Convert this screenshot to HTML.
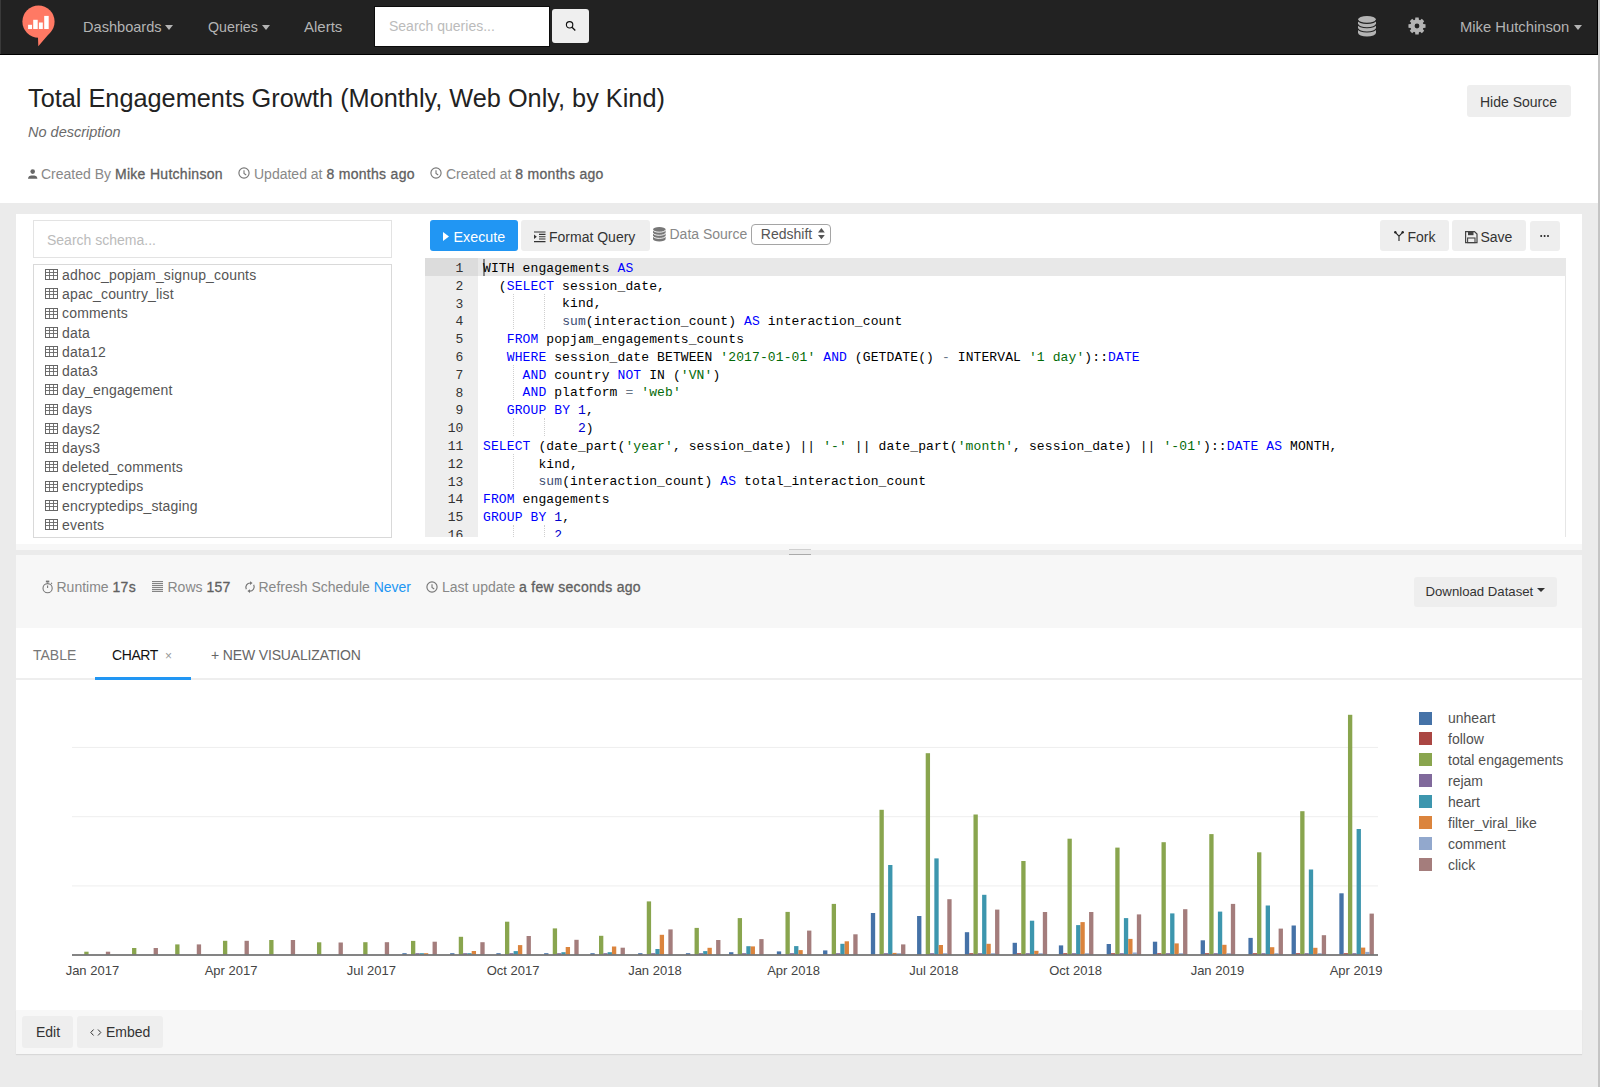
<!DOCTYPE html>
<html><head><meta charset="utf-8"><style>
*{box-sizing:border-box;margin:0;padding:0}
html,body{width:1600px;height:1087px;overflow:hidden}
body{background:#ebebeb;font-family:"Liberation Sans",sans-serif;font-size:14px;color:#333;position:relative}
.a{position:absolute;white-space:nowrap}
.nt{position:absolute;white-space:nowrap;color:#b4b4b4;font-size:15px;transform-origin:0 0}
.caret{position:absolute;width:0;height:0;border-left:4.7px solid transparent;border-right:4.7px solid transparent;border-top:5px solid #b4b4b4}
.btn{position:absolute;background:#eeeeee;border-radius:3px}
.meta{position:absolute;white-space:nowrap;color:#888;font-size:14px}
.meta b{color:#606060;font-weight:normal;letter-spacing:0.3px;-webkit-text-stroke:0.3px #606060}
.tab{position:absolute;white-space:nowrap;font-size:14px}
.tick{position:absolute;white-space:nowrap;font-size:13px;color:#444;width:80px;text-align:center}
.leg{position:absolute;white-space:nowrap;font-size:14px;color:#505050}
.code{position:absolute;white-space:pre;font-family:"Liberation Mono",monospace;font-size:13px;letter-spacing:0.11px;color:#000}
.gut{position:absolute;white-space:nowrap;font-family:"Liberation Mono",monospace;font-size:13px;color:#333;text-align:right;width:38px}
.kw{color:#0000ff}.st{color:#036a07}.fn{color:#3c4c72}.op{color:#687687}.nu{color:#0000cd}
.sch{position:absolute;white-space:nowrap;color:#555;font-size:14px;letter-spacing:0.17px}
</style></head><body>
<div class="a" style="left:0px;top:0px;width:1598px;height:55px;background:#222;border-bottom:1.4px solid #000;border-right:1px solid #000"></div>
<div class="a" style="left:0px;top:0px;width:1px;height:54px;background:#3a3a3a"></div>
<svg class="a" style="left:0px;top:0px;overflow:visible" width="60" height="50" viewBox="0 0 60 50">
 <circle cx="38.5" cy="21.6" r="16.1" fill="#ff7964"/>
 <path d="M37.9 35 L38.3 46.2 L51.8 30.5 L44 34 Z" fill="#ff7964"/>
 <rect x="28.1" y="24.8" width="3.9" height="4.2" fill="#fff"/>
 <rect x="33.2" y="19.8" width="4.5" height="9.2" fill="#fff"/>
 <rect x="38.9" y="22.5" width="3.9" height="6.5" fill="#fff"/>
 <rect x="44.2" y="15.9" width="4.5" height="13.1" fill="#fff"/></svg>
<div class="nt" style="left:83px;top:17.8px;transform:scaleX(0.972)">Dashboards</div>
<div class="caret" style="left:165px;top:24.5px"></div>
<div class="nt" style="left:207.5px;top:17.8px;transform:scaleX(0.95)">Queries</div>
<div class="caret" style="left:262px;top:24.5px"></div>
<div class="nt" style="left:304px;top:17.8px;">Alerts</div>
<div class="a" style="left:374px;top:6px;width:176px;height:41px;background:#fff;border:1px solid #0c0c0c"></div>
<div class="a" style="left:389px;top:18px;color:#bbb;font-size:14px">Search queries...</div>
<div class="btn" style="left:552px;top:9px;width:37px;height:34px;background:#efefef"></div>
<svg class="a" style="left:564px;top:19px;overflow:visible" width="12" height="12" viewBox="0 0 12 12"><circle cx="5.6" cy="5.8" r="3.2" fill="none" stroke="#111" stroke-width="1.15"/><path d="M8 8.3L11.3 11.4" stroke="#111" stroke-width="1.35"/></svg>
<svg class="a" style="left:1358.4px;top:15.6px;overflow:visible" width="18" height="21" viewBox="0 0 18 21"><path d="M0 3.7 A9 3.7 0 0 1 18 3.7 V16.8 A9 3.7 0 0 1 0 16.8 Z" fill="#b4b4b4"/>
<path d="M0 3.9 A9 3.5 0 0 0 18 3.9 M0 8.3 A9 3.5 0 0 0 18 8.3 M0 12.5 A9 3.5 0 0 0 18 12.5" fill="none" stroke="#222" stroke-width="1.1"/></svg>
<svg class="a" style="left:1408.3px;top:16.7px;overflow:visible" width="18" height="18" viewBox="0 0 18 18"><path fill-rule="evenodd" fill="#b4b4b4" d="M6.47 2.90 L7.07 2.69 L7.34 0.46 L10.66 0.46 L10.93 2.69 L11.53 2.90 L12.10 3.17 L13.86 1.79 L16.21 4.14 L14.83 5.90 L15.10 6.47 L15.31 7.07 L17.54 7.34 L17.54 10.66 L15.31 10.93 L15.10 11.53 L14.83 12.10 L16.21 13.86 L13.86 16.21 L12.10 14.83 L11.53 15.10 L10.93 15.31 L10.66 17.54 L7.34 17.54 L7.07 15.31 L6.47 15.10 L5.90 14.83 L4.14 16.21 L1.79 13.86 L3.17 12.10 L2.90 11.53 L2.69 10.93 L0.46 10.66 L0.46 7.34 L2.69 7.07 L2.90 6.47 L3.17 5.90 L1.79 4.14 L4.14 1.79 L5.90 3.17 Z M11.4 9 A2.4 2.4 0 1 0 6.6 9 A2.4 2.4 0 1 0 11.4 9 Z"/></svg>
<div class="nt" style="left:1459.5px;top:17.8px;transform:scaleX(0.985)">Mike Hutchinson</div>
<div class="caret" style="left:1574px;top:24.5px"></div>
<div class="a" style="left:1598px;top:0px;width:2px;height:1087px;background:#c4c4c4"></div>
<div class="a" style="left:0px;top:55px;width:1598px;height:148px;background:#fff"></div>
<div class="a" style="left:28px;top:83.5px;font-size:25.3px;color:#222">Total Engagements Growth (Monthly, Web Only, by Kind)</div>
<div class="a" style="left:28px;top:124px;font-size:14.5px;font-style:italic;color:#6a6a6a">No description</div>
<svg class="a" style="left:27.5px;top:168.5px;overflow:visible" width="10" height="10" viewBox="0 0 10 10"><circle cx="4.7" cy="2.6" r="2.3" fill="#666"/><path d="M0 9.8 C0.3 6.8 2.5 6.6 4.7 6.6 C6.9 6.6 9.1 6.8 9.4 9.8 Z" fill="#666"/></svg>
<div class="meta" style="left:41px;top:165.5px;">Created By <b>Mike Hutchinson</b></div>
<svg class="a" style="left:237.5px;top:167.2px;overflow:visible" width="12" height="12" viewBox="0 0 12 12"><circle cx="6" cy="6" r="5.1" fill="none" stroke="#777" stroke-width="1.15"/><path d="M6 3.2V6.4L8.2 8" fill="none" stroke="#777" stroke-width="1.1"/></svg>
<div class="meta" style="left:254px;top:165.5px;">Updated at <b>8 months ago</b></div>
<svg class="a" style="left:429.5px;top:167.2px;overflow:visible" width="12" height="12" viewBox="0 0 12 12"><circle cx="6" cy="6" r="5.1" fill="none" stroke="#777" stroke-width="1.15"/><path d="M6 3.2V6.4L8.2 8" fill="none" stroke="#777" stroke-width="1.1"/></svg>
<div class="meta" style="left:446px;top:165.5px;">Created at <b>8 months ago</b></div>
<div class="btn" style="left:1467px;top:85px;width:104px;height:32px"></div>
<div class="a" style="left:1480px;top:94px;font-size:14px;color:#333">Hide Source</div>
<div class="a" style="left:16px;top:214px;width:1566px;height:330px;background:#fff"></div>
<div class="a" style="left:33px;top:220px;width:358.5px;height:38px;border:1px solid #e3e3e3;background:#fff"></div>
<div class="a" style="left:47px;top:232px;color:#bbb;font-size:14px">Search schema...</div>
<div class="a" style="left:33px;top:264px;width:358.5px;height:274px;border:1px solid #d9d9d9;background:#fff"></div>
<div class="sch" style="left:45px;top:266.8px"><svg width="13" height="11" style="position:absolute;left:0;top:2.3px" viewBox="0 0 13 11"><rect x="0.5" y="0.5" width="12" height="10" fill="none" stroke="#666"/><path d="M0 3.5H13M0 6.5H13M4.5 0V11M8.5 0V11" stroke="#666" stroke-width="0.9"/></svg><span style="position:absolute;left:17px;top:0">adhoc_popjam_signup_counts</span></div>
<div class="sch" style="left:45px;top:286.0px"><svg width="13" height="11" style="position:absolute;left:0;top:2.3px" viewBox="0 0 13 11"><rect x="0.5" y="0.5" width="12" height="10" fill="none" stroke="#666"/><path d="M0 3.5H13M0 6.5H13M4.5 0V11M8.5 0V11" stroke="#666" stroke-width="0.9"/></svg><span style="position:absolute;left:17px;top:0">apac_country_list</span></div>
<div class="sch" style="left:45px;top:305.3px"><svg width="13" height="11" style="position:absolute;left:0;top:2.3px" viewBox="0 0 13 11"><rect x="0.5" y="0.5" width="12" height="10" fill="none" stroke="#666"/><path d="M0 3.5H13M0 6.5H13M4.5 0V11M8.5 0V11" stroke="#666" stroke-width="0.9"/></svg><span style="position:absolute;left:17px;top:0">comments</span></div>
<div class="sch" style="left:45px;top:324.5px"><svg width="13" height="11" style="position:absolute;left:0;top:2.3px" viewBox="0 0 13 11"><rect x="0.5" y="0.5" width="12" height="10" fill="none" stroke="#666"/><path d="M0 3.5H13M0 6.5H13M4.5 0V11M8.5 0V11" stroke="#666" stroke-width="0.9"/></svg><span style="position:absolute;left:17px;top:0">data</span></div>
<div class="sch" style="left:45px;top:343.7px"><svg width="13" height="11" style="position:absolute;left:0;top:2.3px" viewBox="0 0 13 11"><rect x="0.5" y="0.5" width="12" height="10" fill="none" stroke="#666"/><path d="M0 3.5H13M0 6.5H13M4.5 0V11M8.5 0V11" stroke="#666" stroke-width="0.9"/></svg><span style="position:absolute;left:17px;top:0">data12</span></div>
<div class="sch" style="left:45px;top:363.0px"><svg width="13" height="11" style="position:absolute;left:0;top:2.3px" viewBox="0 0 13 11"><rect x="0.5" y="0.5" width="12" height="10" fill="none" stroke="#666"/><path d="M0 3.5H13M0 6.5H13M4.5 0V11M8.5 0V11" stroke="#666" stroke-width="0.9"/></svg><span style="position:absolute;left:17px;top:0">data3</span></div>
<div class="sch" style="left:45px;top:382.2px"><svg width="13" height="11" style="position:absolute;left:0;top:2.3px" viewBox="0 0 13 11"><rect x="0.5" y="0.5" width="12" height="10" fill="none" stroke="#666"/><path d="M0 3.5H13M0 6.5H13M4.5 0V11M8.5 0V11" stroke="#666" stroke-width="0.9"/></svg><span style="position:absolute;left:17px;top:0">day_engagement</span></div>
<div class="sch" style="left:45px;top:401.4px"><svg width="13" height="11" style="position:absolute;left:0;top:2.3px" viewBox="0 0 13 11"><rect x="0.5" y="0.5" width="12" height="10" fill="none" stroke="#666"/><path d="M0 3.5H13M0 6.5H13M4.5 0V11M8.5 0V11" stroke="#666" stroke-width="0.9"/></svg><span style="position:absolute;left:17px;top:0">days</span></div>
<div class="sch" style="left:45px;top:420.6px"><svg width="13" height="11" style="position:absolute;left:0;top:2.3px" viewBox="0 0 13 11"><rect x="0.5" y="0.5" width="12" height="10" fill="none" stroke="#666"/><path d="M0 3.5H13M0 6.5H13M4.5 0V11M8.5 0V11" stroke="#666" stroke-width="0.9"/></svg><span style="position:absolute;left:17px;top:0">days2</span></div>
<div class="sch" style="left:45px;top:439.9px"><svg width="13" height="11" style="position:absolute;left:0;top:2.3px" viewBox="0 0 13 11"><rect x="0.5" y="0.5" width="12" height="10" fill="none" stroke="#666"/><path d="M0 3.5H13M0 6.5H13M4.5 0V11M8.5 0V11" stroke="#666" stroke-width="0.9"/></svg><span style="position:absolute;left:17px;top:0">days3</span></div>
<div class="sch" style="left:45px;top:459.1px"><svg width="13" height="11" style="position:absolute;left:0;top:2.3px" viewBox="0 0 13 11"><rect x="0.5" y="0.5" width="12" height="10" fill="none" stroke="#666"/><path d="M0 3.5H13M0 6.5H13M4.5 0V11M8.5 0V11" stroke="#666" stroke-width="0.9"/></svg><span style="position:absolute;left:17px;top:0">deleted_comments</span></div>
<div class="sch" style="left:45px;top:478.3px"><svg width="13" height="11" style="position:absolute;left:0;top:2.3px" viewBox="0 0 13 11"><rect x="0.5" y="0.5" width="12" height="10" fill="none" stroke="#666"/><path d="M0 3.5H13M0 6.5H13M4.5 0V11M8.5 0V11" stroke="#666" stroke-width="0.9"/></svg><span style="position:absolute;left:17px;top:0">encryptedips</span></div>
<div class="sch" style="left:45px;top:497.6px"><svg width="13" height="11" style="position:absolute;left:0;top:2.3px" viewBox="0 0 13 11"><rect x="0.5" y="0.5" width="12" height="10" fill="none" stroke="#666"/><path d="M0 3.5H13M0 6.5H13M4.5 0V11M8.5 0V11" stroke="#666" stroke-width="0.9"/></svg><span style="position:absolute;left:17px;top:0">encryptedips_staging</span></div>
<div class="sch" style="left:45px;top:516.8px"><svg width="13" height="11" style="position:absolute;left:0;top:2.3px" viewBox="0 0 13 11"><rect x="0.5" y="0.5" width="12" height="10" fill="none" stroke="#666"/><path d="M0 3.5H13M0 6.5H13M4.5 0V11M8.5 0V11" stroke="#666" stroke-width="0.9"/></svg><span style="position:absolute;left:17px;top:0">events</span></div>
<div class="a" style="left:430px;top:220px;width:88px;height:31px;background:#2196f3;border-radius:3px"></div>
<svg class="a" style="left:442.5px;top:232px;overflow:visible" width="7" height="9" viewBox="0 0 7 9"><path d="M0 0L6 4.5L0 9Z" fill="#fff"/></svg>
<div class="a" style="left:453.5px;top:229px;color:#fff;font-size:14.3px">Execute</div>
<div class="btn" style="left:521px;top:220px;width:129px;height:31px"></div>
<svg class="a" style="left:534px;top:230.5px;overflow:visible" width="12" height="12" viewBox="0 0 12 12"><path d="M0 1H11.5M5 3.4H11.5M5 5.7H11.5M5 8H11.5M0 10.6H11.5" stroke="#333" stroke-width="1.1"/><path d="M0 3.6L2.8 5.8L0 8Z" fill="#333"/></svg>
<div class="a" style="left:549px;top:229px;color:#333;font-size:14px">Format Query</div>
<svg class="a" style="left:653px;top:226.7px;overflow:visible" width="13" height="15" viewBox="0 0 13 15"><path d="M0 2.6 A6.3 2.6 0 0 1 12.6 2.6 V12 A6.3 2.6 0 0 1 0 12 Z" fill="#777"/>
<path d="M0 2.8 A6.3 2.4 0 0 0 12.6 2.8 M0 5.9 A6.3 2.4 0 0 0 12.6 5.9 M0 9 A6.3 2.4 0 0 0 12.6 9" fill="none" stroke="#fff" stroke-width="0.9"/></svg>
<div class="a" style="left:669.5px;top:226px;color:#888;font-size:14px">Data Source</div>
<div class="a" style="left:751px;top:224px;width:80px;height:21px;border:1px solid #a5a5a5;border-radius:4px;background:#fff"></div>
<div class="a" style="left:760.8px;top:226px;color:#555;font-size:14px">Redshift</div>
<svg class="a" style="left:818px;top:228px;overflow:visible" width="7" height="12" viewBox="0 0 7 12"><path d="M0 4.4L3.4 0L6.8 4.4Z M0 6.9L3.4 11.3L6.8 6.9Z" fill="#555"/></svg>
<div class="btn" style="left:1380px;top:220px;width:69px;height:31px"></div>
<svg class="a" style="left:1393.5px;top:231px;overflow:visible" width="10" height="10" viewBox="0 0 10 10"><circle cx="1.3" cy="1.3" r="1.2" fill="#222"/><circle cx="8.7" cy="1.3" r="1.2" fill="#222"/><path d="M1.3 1.3L5 5.2L8.7 1.3M5 5.2V10" fill="none" stroke="#222" stroke-width="1.1"/></svg>
<div class="a" style="left:1407.5px;top:229px;font-size:14px;color:#333">Fork</div>
<div class="btn" style="left:1452px;top:220px;width:74px;height:31px"></div>
<svg class="a" style="left:1465.3px;top:230.6px;overflow:visible" width="13" height="13" viewBox="0 0 13 13"><path d="M0.6 0.6H9.5L12 3.1V11.6H0.6Z" fill="none" stroke="#444" stroke-width="1.2"/><rect x="3" y="0.6" width="5.5" height="3.6" fill="#444"/><rect x="2.6" y="7" width="7.4" height="4.6" fill="none" stroke="#444" stroke-width="1.1"/></svg>
<div class="a" style="left:1480.5px;top:229px;font-size:14px;color:#333">Save</div>
<div class="btn" style="left:1530px;top:221px;width:30px;height:30px"></div>
<svg class="a" style="left:1540px;top:235px;overflow:visible" width="10" height="3" viewBox="0 0 10 3"><circle cx="1.2" cy="1.1" r="1" fill="#222"/><circle cx="4.6" cy="1.1" r="1" fill="#222"/><circle cx="8" cy="1.1" r="1" fill="#222"/></svg>
<div class="a" style="left:424.8px;top:258px;width:1141px;height:279px;border-right:1px solid #e6e6e6;overflow:hidden"></div>
<div class="a" style="left:424.8px;top:258px;width:53px;height:279px;background:#eeeeee"></div>
<div class="a" style="left:424.8px;top:258px;width:53px;height:18px;background:#dcdcdc"></div>
<div class="a" style="left:477.8px;top:258px;width:1088px;height:18px;background:#e8e8e8"></div>
<div class="a" style="left:483px;top:258.5px;width:1.5px;height:17px;background:#888"></div>
<div class="a" style="left:0;top:0;width:1600px;height:537px;overflow:hidden"><div class="gut" style="left:425.3px;top:260.00px;line-height:17.8px">1</div><div class="code" style="left:483px;top:259.80px;line-height:17.8px">WITH engagements <span class="kw">AS</span></div>
<div class="gut" style="left:425.3px;top:277.80px;line-height:17.8px">2</div><div class="code" style="left:483px;top:277.60px;line-height:17.8px">  (<span class="kw">SELECT</span> session_date,</div>
<div class="gut" style="left:425.3px;top:295.60px;line-height:17.8px">3</div><div class="code" style="left:483px;top:295.40px;line-height:17.8px">          kind,</div>
<div class="gut" style="left:425.3px;top:313.40px;line-height:17.8px">4</div><div class="code" style="left:483px;top:313.20px;line-height:17.8px">          <span class="fn">sum</span>(interaction_count) <span class="kw">AS</span> interaction_count</div>
<div class="gut" style="left:425.3px;top:331.20px;line-height:17.8px">5</div><div class="code" style="left:483px;top:331.00px;line-height:17.8px">   <span class="kw">FROM</span> popjam_engagements_counts</div>
<div class="gut" style="left:425.3px;top:349.00px;line-height:17.8px">6</div><div class="code" style="left:483px;top:348.80px;line-height:17.8px">   <span class="kw">WHERE</span> session_date BETWEEN <span class="st">&#x27;2017-01-01&#x27;</span> <span class="kw">AND</span> (GETDATE() <span class="op">-</span> INTERVAL <span class="st">&#x27;1 day&#x27;</span>)::<span class="kw">DATE</span></div>
<div class="gut" style="left:425.3px;top:366.80px;line-height:17.8px">7</div><div class="code" style="left:483px;top:366.60px;line-height:17.8px">     <span class="kw">AND</span> country <span class="kw">NOT</span> IN (<span class="st">&#x27;VN&#x27;</span>)</div>
<div class="gut" style="left:425.3px;top:384.60px;line-height:17.8px">8</div><div class="code" style="left:483px;top:384.40px;line-height:17.8px">     <span class="kw">AND</span> platform <span class="op">=</span> <span class="st">&#x27;web&#x27;</span></div>
<div class="gut" style="left:425.3px;top:402.40px;line-height:17.8px">9</div><div class="code" style="left:483px;top:402.20px;line-height:17.8px">   <span class="kw">GROUP</span> <span class="kw">BY</span> <span class="nu">1</span>,</div>
<div class="gut" style="left:425.3px;top:420.20px;line-height:17.8px">10</div><div class="code" style="left:483px;top:420.00px;line-height:17.8px">            <span class="nu">2</span>)</div>
<div class="gut" style="left:425.3px;top:438.00px;line-height:17.8px">11</div><div class="code" style="left:483px;top:437.80px;line-height:17.8px"><span class="kw">SELECT</span> (date_part(<span class="st">&#x27;year&#x27;</span>, session_date) || <span class="st">&#x27;-&#x27;</span> || date_part(<span class="st">&#x27;month&#x27;</span>, session_date) || <span class="st">&#x27;-01&#x27;</span>)::<span class="kw">DATE</span> <span class="kw">AS</span> MONTH,</div>
<div class="gut" style="left:425.3px;top:455.80px;line-height:17.8px">12</div><div class="code" style="left:483px;top:455.60px;line-height:17.8px">       kind,</div>
<div class="gut" style="left:425.3px;top:473.60px;line-height:17.8px">13</div><div class="code" style="left:483px;top:473.40px;line-height:17.8px">       <span class="fn">sum</span>(interaction_count) <span class="kw">AS</span> total_interaction_count</div>
<div class="gut" style="left:425.3px;top:491.40px;line-height:17.8px">14</div><div class="code" style="left:483px;top:491.20px;line-height:17.8px"><span class="kw">FROM</span> engagements</div>
<div class="gut" style="left:425.3px;top:509.20px;line-height:17.8px">15</div><div class="code" style="left:483px;top:509.00px;line-height:17.8px"><span class="kw">GROUP</span> <span class="kw">BY</span> <span class="nu">1</span>,</div>
<div class="gut" style="left:425.3px;top:527.00px;line-height:17.8px">16</div><div class="code" style="left:483px;top:526.80px;line-height:17.8px">         <span class="nu">2</span></div>
<div class="a" style="left:512.5px;top:293.6px;height:35.6px;border-left:1px dotted #cfcfcf"></div><div class="a" style="left:544px;top:293.6px;height:35.6px;border-left:1px dotted #cfcfcf"></div><div class="a" style="left:512.5px;top:364.8px;height:35.6px;border-left:1px dotted #cfcfcf"></div><div class="a" style="left:512.5px;top:418.2px;height:17.8px;border-left:1px dotted #cfcfcf"></div><div class="a" style="left:544px;top:418.2px;height:17.8px;border-left:1px dotted #cfcfcf"></div><div class="a" style="left:512.5px;top:453.8px;height:35.6px;border-left:1px dotted #cfcfcf"></div><div class="a" style="left:512.5px;top:525.0px;height:12.0px;border-left:1px dotted #cfcfcf"></div><div class="a" style="left:544px;top:525.0px;height:12.0px;border-left:1px dotted #cfcfcf"></div></div>
<div class="a" style="left:16px;top:544px;width:1566px;height:84px;background:#f7f7f7"></div>
<div class="a" style="left:16px;top:550px;width:1566px;height:5px;background:#ebebeb"></div>
<div class="a" style="left:789px;top:548.5px;width:22px;height:1px;background:#cfcfcf"></div>
<div class="a" style="left:789px;top:554px;width:22px;height:1.2px;background:#aaa"></div>
<svg class="a" style="left:41.5px;top:579.5px;overflow:visible" width="12" height="14" viewBox="0 0 12 14"><circle cx="5.6" cy="8.2" r="4.6" fill="none" stroke="#777" stroke-width="1.1"/><rect x="3.9" y="0.6" width="3.4" height="1.8" fill="#777"/><path d="M5.6 2.4V3.6M5.6 5.4V8" stroke="#777" stroke-width="1.1"/><path d="M9 3.8L10 2.9" stroke="#777" stroke-width="1.2"/></svg>
<div class="meta" style="left:56.5px;top:579.3px;">Runtime <b>17s</b></div>
<svg class="a" style="left:152px;top:581px;overflow:visible" width="11" height="11" viewBox="0 0 11 11"><path d="M0 0.6H11M0 2.6H11M0 4.6H11M0 6.6H11M0 8.6H11M0 10.4H11" stroke="#777" stroke-width="1"/></svg>
<div class="meta" style="left:167.5px;top:579.3px;">Rows <b>157</b></div>
<svg class="a" style="left:244.5px;top:580.5px;overflow:visible" width="10" height="12" viewBox="0 0 10 12"><path d="M1.3 8.3 A4.4 4.4 0 0 1 5.5 2" fill="none" stroke="#777" stroke-width="1.2"/><path d="M5 0.2L7.6 2.1L5 4Z" fill="#777"/><path d="M8.7 3.8 A4.4 4.4 0 0 1 4.5 10.2" fill="none" stroke="#777" stroke-width="1.2"/><path d="M5 8.2L2.4 10.1L5 12Z" fill="#777"/></svg>
<div class="meta" style="left:258.5px;top:579.3px;">Refresh Schedule <span style="color:#2196f3">Never</span></div>
<svg class="a" style="left:426px;top:581px;overflow:visible" width="12" height="12" viewBox="0 0 12 12"><circle cx="6" cy="6" r="5.1" fill="none" stroke="#777" stroke-width="1.15"/><path d="M6 3.2V6.4L8.2 8" fill="none" stroke="#777" stroke-width="1.1"/></svg>
<div class="meta" style="left:442px;top:579.3px;">Last update <b>a few seconds ago</b></div>
<div class="btn" style="left:1414px;top:577px;width:143px;height:30px"></div>
<div class="a" style="left:1425.5px;top:584px;font-size:13.2px;color:#333">Download Dataset</div>
<div class="a" style="left:1537px;top:588px;width:0;height:0;border-left:4.5px solid transparent;border-right:4.5px solid transparent;border-top:4.5px solid #333"></div>
<div class="a" style="left:16px;top:628px;width:1566px;height:382px;background:#fff"></div>
<div class="a" style="left:16px;top:678px;width:1566px;height:2px;background:#eee"></div>
<div class="a" style="left:95px;top:677px;width:96px;height:3px;background:#2196f3"></div>
<div class="tab" style="left:33px;top:646.5px;color:#777">TABLE</div>
<div class="tab" style="left:112px;top:646.5px;color:#111;letter-spacing:-0.4px">CHART</div>
<div class="a" style="left:165px;top:649px;font-size:12px;color:#999">&times;</div>
<div class="tab" style="left:211px;top:646.5px;color:#666;letter-spacing:-0.15px">+ NEW VISUALIZATION</div>
<svg class="a" style="left:0;top:0" width="1600" height="1087" viewBox="0 0 1600 1087"><rect x="72" y="746.9" width="1306" height="1" fill="#eee"/><rect x="72" y="816.2" width="1306" height="1" fill="#eee"/><rect x="72" y="885.4" width="1306" height="1" fill="#eee"/><rect x="84.27" y="951.7" width="4.32" height="3.3" fill="#89A54E"/><rect x="105.85" y="951.7" width="4.32" height="3.3" fill="#A47D7C"/><rect x="132.04" y="948.0" width="4.32" height="7.0" fill="#89A54E"/><rect x="153.62" y="948.0" width="4.32" height="7.0" fill="#A47D7C"/><rect x="175.19" y="944.4" width="4.32" height="10.6" fill="#89A54E"/><rect x="196.77" y="944.4" width="4.32" height="10.6" fill="#A47D7C"/><rect x="222.97" y="940.8" width="4.32" height="14.2" fill="#89A54E"/><rect x="244.54" y="940.8" width="4.32" height="14.2" fill="#A47D7C"/><rect x="269.20" y="940.0" width="4.32" height="15.0" fill="#89A54E"/><rect x="290.78" y="940.0" width="4.32" height="15.0" fill="#A47D7C"/><rect x="316.98" y="942.3" width="4.32" height="12.7" fill="#89A54E"/><rect x="338.55" y="942.5" width="4.32" height="12.5" fill="#A47D7C"/><rect x="363.21" y="942.2" width="4.32" height="12.8" fill="#89A54E"/><rect x="384.78" y="942.2" width="4.32" height="12.8" fill="#A47D7C"/><rect x="402.35" y="953.2" width="4.32" height="1.8" fill="#4572A7"/><rect x="410.98" y="940.9" width="4.32" height="14.1" fill="#89A54E"/><rect x="415.30" y="953.2" width="4.32" height="1.8" fill="#80699B"/><rect x="419.61" y="953.2" width="4.32" height="1.8" fill="#3D96AE"/><rect x="423.93" y="953.2" width="4.32" height="1.8" fill="#DB843D"/><rect x="432.56" y="941.7" width="4.32" height="13.3" fill="#A47D7C"/><rect x="450.13" y="953.2" width="4.32" height="1.8" fill="#4572A7"/><rect x="458.76" y="936.8" width="4.32" height="18.2" fill="#89A54E"/><rect x="463.07" y="953.2" width="4.32" height="1.8" fill="#80699B"/><rect x="467.39" y="953.2" width="4.32" height="1.8" fill="#3D96AE"/><rect x="471.70" y="951.0" width="4.32" height="4.0" fill="#DB843D"/><rect x="480.33" y="942.2" width="4.32" height="12.8" fill="#A47D7C"/><rect x="496.36" y="953.2" width="4.32" height="1.8" fill="#4572A7"/><rect x="504.99" y="921.7" width="4.32" height="33.3" fill="#89A54E"/><rect x="509.31" y="953.2" width="4.32" height="1.8" fill="#80699B"/><rect x="513.62" y="951.1" width="4.32" height="3.9" fill="#3D96AE"/><rect x="517.94" y="945.1" width="4.32" height="9.9" fill="#DB843D"/><rect x="526.57" y="936.0" width="4.32" height="19.0" fill="#A47D7C"/><rect x="544.13" y="953.2" width="4.32" height="1.8" fill="#4572A7"/><rect x="552.76" y="928.4" width="4.32" height="26.6" fill="#89A54E"/><rect x="557.08" y="953.2" width="4.32" height="1.8" fill="#80699B"/><rect x="561.39" y="952.2" width="4.32" height="2.8" fill="#3D96AE"/><rect x="565.71" y="947.0" width="4.32" height="8.0" fill="#DB843D"/><rect x="574.34" y="939.8" width="4.32" height="15.2" fill="#A47D7C"/><rect x="590.37" y="953.2" width="4.32" height="1.8" fill="#4572A7"/><rect x="599.00" y="935.8" width="4.32" height="19.2" fill="#89A54E"/><rect x="603.31" y="953.2" width="4.32" height="1.8" fill="#80699B"/><rect x="607.63" y="952.2" width="4.32" height="2.8" fill="#3D96AE"/><rect x="611.94" y="946.5" width="4.32" height="8.5" fill="#DB843D"/><rect x="620.57" y="947.7" width="4.32" height="7.3" fill="#A47D7C"/><rect x="638.14" y="953.2" width="4.32" height="1.8" fill="#4572A7"/><rect x="646.77" y="901.4" width="4.32" height="53.6" fill="#89A54E"/><rect x="651.09" y="953.2" width="4.32" height="1.8" fill="#80699B"/><rect x="655.40" y="949.0" width="4.32" height="6.0" fill="#3D96AE"/><rect x="659.72" y="934.8" width="4.32" height="20.2" fill="#DB843D"/><rect x="668.35" y="929.4" width="4.32" height="25.6" fill="#A47D7C"/><rect x="685.92" y="953.2" width="4.32" height="1.8" fill="#4572A7"/><rect x="694.55" y="927.9" width="4.32" height="27.1" fill="#89A54E"/><rect x="698.86" y="953.2" width="4.32" height="1.8" fill="#80699B"/><rect x="703.18" y="951.1" width="4.32" height="3.9" fill="#3D96AE"/><rect x="707.49" y="947.8" width="4.32" height="7.2" fill="#DB843D"/><rect x="716.12" y="940.0" width="4.32" height="15.0" fill="#A47D7C"/><rect x="729.07" y="952.2" width="4.32" height="2.8" fill="#4572A7"/><rect x="737.70" y="918.1" width="4.32" height="36.9" fill="#89A54E"/><rect x="742.01" y="953.2" width="4.32" height="1.8" fill="#80699B"/><rect x="746.33" y="946.2" width="4.32" height="8.8" fill="#3D96AE"/><rect x="750.64" y="946.4" width="4.32" height="8.6" fill="#DB843D"/><rect x="759.27" y="939.1" width="4.32" height="15.9" fill="#A47D7C"/><rect x="776.84" y="951.4" width="4.32" height="3.6" fill="#4572A7"/><rect x="785.47" y="911.9" width="4.32" height="43.1" fill="#89A54E"/><rect x="789.79" y="953.2" width="4.32" height="1.8" fill="#80699B"/><rect x="794.10" y="946.1" width="4.32" height="8.9" fill="#3D96AE"/><rect x="798.42" y="950.1" width="4.32" height="4.9" fill="#DB843D"/><rect x="807.05" y="930.6" width="4.32" height="24.4" fill="#A47D7C"/><rect x="823.07" y="950.4" width="4.32" height="4.6" fill="#4572A7"/><rect x="831.70" y="903.9" width="4.32" height="51.1" fill="#89A54E"/><rect x="836.02" y="953.2" width="4.32" height="1.8" fill="#80699B"/><rect x="840.33" y="943.8" width="4.32" height="11.2" fill="#3D96AE"/><rect x="844.65" y="941.3" width="4.32" height="13.7" fill="#DB843D"/><rect x="853.28" y="934.3" width="4.32" height="20.7" fill="#A47D7C"/><rect x="870.85" y="913.0" width="4.32" height="42.0" fill="#4572A7"/><rect x="879.48" y="809.8" width="4.32" height="145.2" fill="#89A54E"/><rect x="883.79" y="953.2" width="4.32" height="1.8" fill="#80699B"/><rect x="888.11" y="865.0" width="4.32" height="90.0" fill="#3D96AE"/><rect x="892.42" y="952.9" width="4.32" height="2.1" fill="#DB843D"/><rect x="896.74" y="953.2" width="4.32" height="1.8" fill="#92A8CD"/><rect x="901.05" y="944.4" width="4.32" height="10.6" fill="#A47D7C"/><rect x="917.08" y="916.0" width="4.32" height="39.0" fill="#4572A7"/><rect x="925.71" y="753.2" width="4.32" height="201.8" fill="#89A54E"/><rect x="930.03" y="953.2" width="4.32" height="1.8" fill="#80699B"/><rect x="934.34" y="858.4" width="4.32" height="96.6" fill="#3D96AE"/><rect x="938.66" y="945.0" width="4.32" height="10.0" fill="#DB843D"/><rect x="942.97" y="953.2" width="4.32" height="1.8" fill="#92A8CD"/><rect x="947.29" y="899.2" width="4.32" height="55.8" fill="#A47D7C"/><rect x="964.85" y="932.2" width="4.32" height="22.8" fill="#4572A7"/><rect x="969.17" y="953.2" width="4.32" height="1.8" fill="#AA4643"/><rect x="973.48" y="814.5" width="4.32" height="140.5" fill="#89A54E"/><rect x="977.80" y="953.2" width="4.32" height="1.8" fill="#80699B"/><rect x="982.11" y="894.8" width="4.32" height="60.2" fill="#3D96AE"/><rect x="986.43" y="943.8" width="4.32" height="11.2" fill="#DB843D"/><rect x="990.74" y="953.2" width="4.32" height="1.8" fill="#92A8CD"/><rect x="995.06" y="909.6" width="4.32" height="45.4" fill="#A47D7C"/><rect x="1012.63" y="942.8" width="4.32" height="12.2" fill="#4572A7"/><rect x="1016.94" y="953.2" width="4.32" height="1.8" fill="#AA4643"/><rect x="1021.26" y="861.0" width="4.32" height="94.0" fill="#89A54E"/><rect x="1025.57" y="953.2" width="4.32" height="1.8" fill="#80699B"/><rect x="1029.89" y="920.7" width="4.32" height="34.3" fill="#3D96AE"/><rect x="1034.20" y="950.8" width="4.32" height="4.2" fill="#DB843D"/><rect x="1038.52" y="953.2" width="4.32" height="1.8" fill="#92A8CD"/><rect x="1042.83" y="912.0" width="4.32" height="43.0" fill="#A47D7C"/><rect x="1058.86" y="945.4" width="4.32" height="9.6" fill="#4572A7"/><rect x="1063.18" y="953.2" width="4.32" height="1.8" fill="#AA4643"/><rect x="1067.49" y="838.7" width="4.32" height="116.3" fill="#89A54E"/><rect x="1071.81" y="953.2" width="4.32" height="1.8" fill="#80699B"/><rect x="1076.12" y="925.1" width="4.32" height="29.9" fill="#3D96AE"/><rect x="1080.44" y="922.1" width="4.32" height="32.9" fill="#DB843D"/><rect x="1084.75" y="953.2" width="4.32" height="1.8" fill="#92A8CD"/><rect x="1089.07" y="912.0" width="4.32" height="43.0" fill="#A47D7C"/><rect x="1106.64" y="944.0" width="4.32" height="11.0" fill="#4572A7"/><rect x="1110.95" y="953.2" width="4.32" height="1.8" fill="#AA4643"/><rect x="1115.27" y="847.6" width="4.32" height="107.4" fill="#89A54E"/><rect x="1119.58" y="953.2" width="4.32" height="1.8" fill="#80699B"/><rect x="1123.90" y="918.1" width="4.32" height="36.9" fill="#3D96AE"/><rect x="1128.21" y="938.9" width="4.32" height="16.1" fill="#DB843D"/><rect x="1132.53" y="952.5" width="4.32" height="2.5" fill="#92A8CD"/><rect x="1136.84" y="914.4" width="4.32" height="40.6" fill="#A47D7C"/><rect x="1152.87" y="941.7" width="4.32" height="13.3" fill="#4572A7"/><rect x="1157.18" y="953.2" width="4.32" height="1.8" fill="#AA4643"/><rect x="1161.50" y="842.2" width="4.32" height="112.8" fill="#89A54E"/><rect x="1165.81" y="953.2" width="4.32" height="1.8" fill="#80699B"/><rect x="1170.13" y="913.4" width="4.32" height="41.6" fill="#3D96AE"/><rect x="1174.44" y="943.4" width="4.32" height="11.6" fill="#DB843D"/><rect x="1178.76" y="953.2" width="4.32" height="1.8" fill="#92A8CD"/><rect x="1183.07" y="909.2" width="4.32" height="45.8" fill="#A47D7C"/><rect x="1200.64" y="940.3" width="4.32" height="14.7" fill="#4572A7"/><rect x="1204.96" y="953.2" width="4.32" height="1.8" fill="#AA4643"/><rect x="1209.27" y="834.1" width="4.32" height="120.9" fill="#89A54E"/><rect x="1213.59" y="953.2" width="4.32" height="1.8" fill="#80699B"/><rect x="1217.90" y="911.6" width="4.32" height="43.4" fill="#3D96AE"/><rect x="1222.22" y="944.8" width="4.32" height="10.2" fill="#DB843D"/><rect x="1226.53" y="953.2" width="4.32" height="1.8" fill="#92A8CD"/><rect x="1230.85" y="903.9" width="4.32" height="51.1" fill="#A47D7C"/><rect x="1248.42" y="937.9" width="4.32" height="17.1" fill="#4572A7"/><rect x="1252.73" y="953.2" width="4.32" height="1.8" fill="#AA4643"/><rect x="1257.05" y="852.3" width="4.32" height="102.7" fill="#89A54E"/><rect x="1261.36" y="953.2" width="4.32" height="1.8" fill="#80699B"/><rect x="1265.68" y="905.5" width="4.32" height="49.5" fill="#3D96AE"/><rect x="1269.99" y="947.2" width="4.32" height="7.8" fill="#DB843D"/><rect x="1274.31" y="953.2" width="4.32" height="1.8" fill="#92A8CD"/><rect x="1278.62" y="928.6" width="4.32" height="26.4" fill="#A47D7C"/><rect x="1291.57" y="925.5" width="4.32" height="29.5" fill="#4572A7"/><rect x="1295.88" y="953.2" width="4.32" height="1.8" fill="#AA4643"/><rect x="1300.20" y="811.2" width="4.32" height="143.8" fill="#89A54E"/><rect x="1304.51" y="953.2" width="4.32" height="1.8" fill="#80699B"/><rect x="1308.83" y="869.5" width="4.32" height="85.5" fill="#3D96AE"/><rect x="1313.14" y="947.8" width="4.32" height="7.2" fill="#DB843D"/><rect x="1317.46" y="953.2" width="4.32" height="1.8" fill="#92A8CD"/><rect x="1321.77" y="935.2" width="4.32" height="19.8" fill="#A47D7C"/><rect x="1339.34" y="893.3" width="4.32" height="61.7" fill="#4572A7"/><rect x="1343.66" y="953.2" width="4.32" height="1.8" fill="#AA4643"/><rect x="1347.97" y="714.8" width="4.32" height="240.2" fill="#89A54E"/><rect x="1352.29" y="953.2" width="4.32" height="1.8" fill="#80699B"/><rect x="1356.60" y="829.0" width="4.32" height="126.0" fill="#3D96AE"/><rect x="1360.92" y="947.6" width="4.32" height="7.4" fill="#DB843D"/><rect x="1365.23" y="951.9" width="4.32" height="3.1" fill="#92A8CD"/><rect x="1369.55" y="913.6" width="4.32" height="41.4" fill="#A47D7C"/><rect x="72" y="954.1" width="1306" height="1.8" fill="#777"/></svg>
<div class="tick" style="left:52.4px;top:963px;">Jan 2017</div>
<div class="tick" style="left:191.1px;top:963px;">Apr 2017</div>
<div class="tick" style="left:331.3px;top:963px;">Jul 2017</div>
<div class="tick" style="left:473.1px;top:963px;">Oct 2017</div>
<div class="tick" style="left:614.9px;top:963px;">Jan 2018</div>
<div class="tick" style="left:753.6px;top:963px;">Apr 2018</div>
<div class="tick" style="left:893.8px;top:963px;">Jul 2018</div>
<div class="tick" style="left:1035.6px;top:963px;">Oct 2018</div>
<div class="tick" style="left:1177.4px;top:963px;">Jan 2019</div>
<div class="tick" style="left:1316.1px;top:963px;">Apr 2019</div>
<div class="a" style="left:1419.3px;top:711.5px;width:13.2px;height:13px;background:#4572A7"></div>
<div class="leg" style="left:1448px;top:710.3px;">unheart</div>
<div class="a" style="left:1419.3px;top:732.4px;width:13.2px;height:13px;background:#AA4643"></div>
<div class="leg" style="left:1448px;top:731.2px;">follow</div>
<div class="a" style="left:1419.3px;top:753.3px;width:13.2px;height:13px;background:#89A54E"></div>
<div class="leg" style="left:1448px;top:752.1px;">total engagements</div>
<div class="a" style="left:1419.3px;top:774.2px;width:13.2px;height:13px;background:#80699B"></div>
<div class="leg" style="left:1448px;top:773.0px;">rejam</div>
<div class="a" style="left:1419.3px;top:795.1px;width:13.2px;height:13px;background:#3D96AE"></div>
<div class="leg" style="left:1448px;top:793.9px;">heart</div>
<div class="a" style="left:1419.3px;top:816.0px;width:13.2px;height:13px;background:#DB843D"></div>
<div class="leg" style="left:1448px;top:814.8px;">filter_viral_like</div>
<div class="a" style="left:1419.3px;top:836.8px;width:13.2px;height:13px;background:#92A8CD"></div>
<div class="leg" style="left:1448px;top:835.6px;">comment</div>
<div class="a" style="left:1419.3px;top:857.7px;width:13.2px;height:13px;background:#A47D7C"></div>
<div class="leg" style="left:1448px;top:856.5px;">click</div>
<div class="a" style="left:16px;top:1010px;width:1566px;height:44px;background:#f7f7f7;box-shadow:0 1px 1px rgba(0,0,0,0.08)"></div>
<div class="btn" style="left:22px;top:1016px;width:51px;height:32px"></div>
<div class="a" style="left:36px;top:1024px;font-size:14px;color:#333">Edit</div>
<div class="btn" style="left:77px;top:1016px;width:86px;height:32px"></div>
<svg class="a" style="left:90px;top:1028.5px;overflow:visible" width="12" height="8" viewBox="0 0 12 8"><path d="M3.6 0.5L0.8 3.5L3.6 6.5M8 0.5L10.8 3.5L8 6.5" fill="none" stroke="#333" stroke-width="1"/></svg>
<div class="a" style="left:106px;top:1024px;font-size:14px;color:#333">Embed</div>
</body></html>
